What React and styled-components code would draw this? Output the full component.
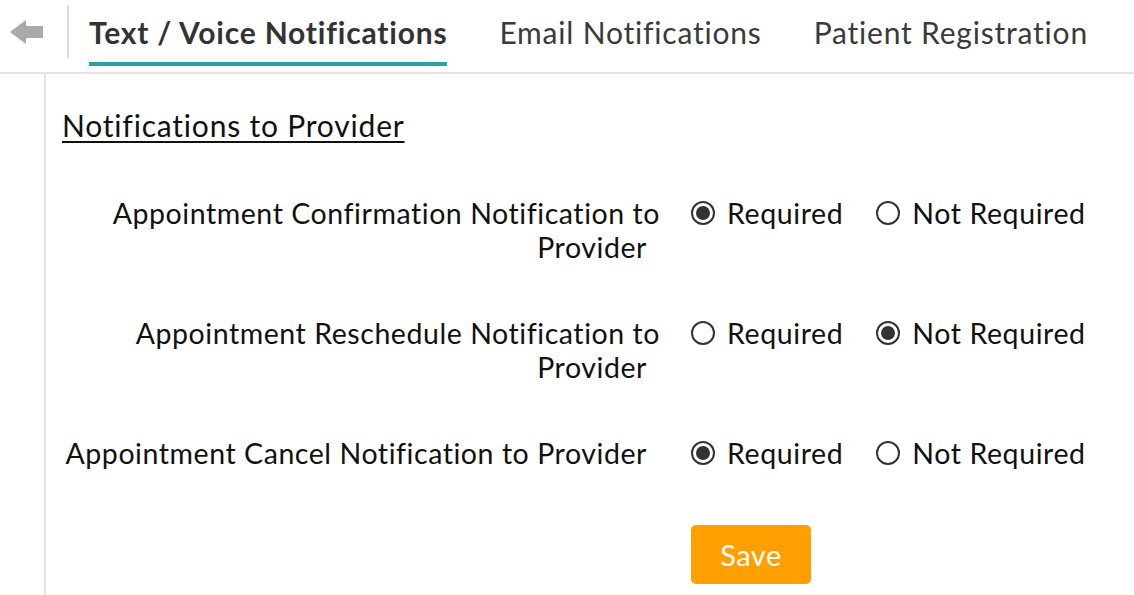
import React, { useState } from 'react';
import styled, { createGlobalStyle } from 'styled-components';

const GlobalStyle = createGlobalStyle`
  html, body {
    margin: 0;
    padding: 0;
    background: #fff;
  }
  body {
    font-family: Lato, "Open Sans", sans-serif;
    color: #111;
  }
  * { box-sizing: border-box; }
`;

const tabs = ['Text / Voice Notifications', 'Email Notifications', 'Patient Registration'];

const settings = [
  { id: 'confirm', label: 'Appointment Confirmation Notification to Provider', value: 'required' },
  { id: 'reschedule', label: 'Appointment Reschedule Notification to Provider', value: 'not' },
  { id: 'cancel', label: 'Appointment Cancel Notification to Provider', value: 'required' },
];

const BackArrow = () => (
  <svg width="34" height="24" viewBox="0 0 34 24">
    <path d="M0 12 L16 0 L16 6 L33 6 L33 18 L16 18 L16 24 Z" fill="#a9a9a9" />
  </svg>
);

const App = () => {
  const [values, setValues] = useState(
    settings.reduce((acc, s) => ({ ...acc, [s.id]: s.value }), {})
  );

  const renderOption = (s, value, text) => (
    <Option key={value}>
      <RadioInput
        type="radio"
        name={s.id}
        checked={values[s.id] === value}
        onChange={() => setValues({ ...values, [s.id]: value })}
      />
      <OptionText>{text}</OptionText>
    </Option>
  );

  return (
    <Page>
      <GlobalStyle />
      <Header>
        <BackButton>
          <BackArrow />
        </BackButton>
        <TabList>
          {tabs.map((t, i) => (
            <Tab key={t} active={i === 0}>{t}</Tab>
          ))}
        </TabList>
      </Header>
      <Content>
        <Heading>Notifications to Provider</Heading>
        <Rows>
          {settings.map(s => (
            <Row key={s.id}>
              <Label>
                {s.label}
                <Spacer />
              </Label>
              <Options>
                {renderOption(s, 'required', 'Required')}
                {renderOption(s, 'not', 'Not Required')}
              </Options>
            </Row>
          ))}
        </Rows>
        <Actions>
          <SaveButton>Save</SaveButton>
        </Actions>
      </Content>
    </Page>
  );
};

const Page = styled.div`
  width: 1134px;
  height: 595px;
  display: flex;
  flex-direction: column;
  overflow: hidden;
`;

const Header = styled.div`
  display: flex;
  align-items: flex-start;
  height: 74px;
  border-bottom: 2px solid #e3e3e3;
`;

const BackButton = styled.div`
  width: 69px;
  height: 53px;
  margin-top: 5px;
  padding-left: 10px;
  display: flex;
  align-items: center;
  border-right: 2px solid #dcdcdc;
`;

const TabList = styled.div`
  display: flex;
  margin-left: 20px;
  gap: 52px;
`;

const Tab = styled.div`
  height: 66px;
  padding-top: 2px;
  display: flex;
  align-items: center;
  font-size: 30px;
  letter-spacing: 0.8px;
  font-weight: ${props => props.active ? 700 : 400};
  color: ${props => props.active ? '#333' : '#3a3a3a'};
  border-bottom: 4px solid ${props => props.active ? '#24a3a5' : 'transparent'};
  white-space: nowrap;
`;

const Content = styled.div`
  flex: 1;
  margin-left: 44px;
  border-left: 2px solid #e3e3e3;
  padding: 34px 0 0 16px;
`;

const Heading = styled.h2`
  margin: 0 0 54px;
  font-size: 30px;
  letter-spacing: 0.8px;
  font-weight: 400;
  line-height: 34px;
  text-decoration: underline;
  text-underline-offset: 4px;
  text-decoration-thickness: 2px;
  color: #111;
`;

const Rows = styled.div`
  display: flex;
  flex-direction: column;
  gap: 52px;
`;

const Row = styled.div`
  display: flex;
  align-items: flex-start;
`;

const Label = styled.div`
  width: 598px;
  text-align: right;
  font-size: 28.5px;
  letter-spacing: 0.56px;
  line-height: 34px;
  color: #111;
`;

const Spacer = styled.span`
  display: inline-block;
  width: 13px;
`;

const Options = styled.div`
  display: flex;
  margin-left: 31px;
  gap: 33px;
`;

const Option = styled.label`
  display: flex;
  align-items: center;
  gap: 12px;
  height: 34px;
  cursor: pointer;
`;

const RadioInput = styled.input`
  appearance: none;
  margin: 0;
  width: 24px;
  height: 24px;
  border: 2px solid #333;
  border-radius: 50%;
  display: grid;
  place-items: center;
  &::before {
    content: '';
    width: 14px;
    height: 14px;
    border-radius: 50%;
    background: #333;
    transform: scale(${props => props.checked ? 1 : 0});
  }
`;

const OptionText = styled.span`
  font-size: 28.5px;
  letter-spacing: 0.6px;
  color: #111;
`;

const Actions = styled.div`
  padding-left: 629px;
  margin-top: 55px;
`;

const SaveButton = styled.button`
  width: 120px;
  height: 59px;
  border: none;
  border-radius: 5px;
  background: #ffa000;
  color: #fff;
  font-family: Lato, sans-serif;
  font-size: 29px;
  letter-spacing: 0.5px;
  cursor: pointer;
`;

export default App;
